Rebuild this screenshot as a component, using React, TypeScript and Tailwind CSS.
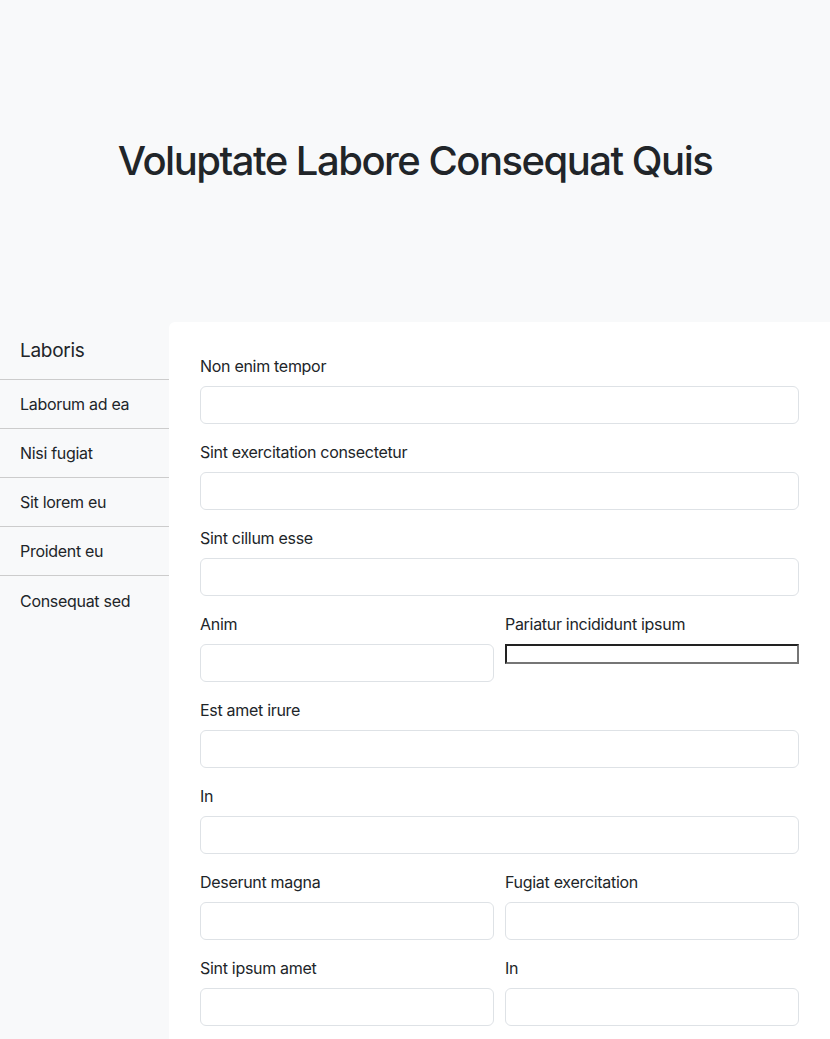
import React from "react";

const navItems = [
  "Laborum ad ea",
  "Nisi fugiat",
  "Sit lorem eu",
  "Proident eu",
  "Consequat sed",
];

type Field = { label: string; plain?: boolean };
type Row = Field[];

const rows: Row[] = [
  [{ label: "Non enim tempor" }],
  [{ label: "Sint exercitation consectetur" }],
  [{ label: "Sint cillum esse" }],
  [{ label: "Anim" }, { label: "Pariatur incididunt ipsum", plain: true }],
  [{ label: "Est amet irure" }],
  [{ label: "In" }],
  [{ label: "Deserunt magna" }, { label: "Fugiat exercitation" }],
  [{ label: "Sint ipsum amet" }, { label: "In" }],
];

const FormField: React.FC<{ field: Field }> = ({ field }) => (
  <div className="flex-1 min-w-0">
    <label className="block mb-2 leading-6">{field.label}</label>
    {field.plain ? (
      <input
        type="text"
        className="block w-full h-[20px] mt-[2px] border-2 border-t-[#222] border-l-[#222] border-b-[#767676] border-r-[#767676] bg-white"
      />
    ) : (
      <input
        type="text"
        className="block w-full h-[38px] px-3 rounded-[6px] border border-[#dee2e6] bg-white outline-none"
      />
    )}
  </div>
);

export default function App() {
  return (
    <div
      className="min-h-screen bg-[#f8f9fa] text-[#212529] text-base tracking-[-0.3px]"
      style={{ fontFamily: "Inter, 'Noto Sans', sans-serif" }}
    >
      {/* Header */}
      <header className="h-[322px] flex items-center justify-center">
        <h1 className="text-[40px] font-medium leading-[1.2] tracking-[-1.5px]">
          Voluptate Labore Consequat Quis
        </h1>
      </header>

      <div className="flex">
        {/* Sidebar */}
        <aside className="w-[169px] shrink-0 bg-[#f8f9fa] rounded-tl-[6px]">
          <div className="h-[58px] px-5 pt-[2px] flex items-center text-[19px] border-b border-[#ccc]">
            Laboris
          </div>
          {navItems.map((item, i) => (
            <div
              key={item}
              className={
                "h-[49px] px-5 flex items-center " +
                (i < navItems.length - 1 ? "border-b border-[#ccc]" : "")
              }
            >
              {item}
            </div>
          ))}
        </aside>

        {/* Form */}
        <main className="flex-1 bg-white rounded-tl-[6px] pt-8 px-[31px] pb-4">
          {rows.map((row, i) => (
            <div key={i} className="flex gap-[11px] mb-4">
              {row.map((field, j) => (
                <FormField key={j} field={field} />
              ))}
            </div>
          ))}
        </main>
      </div>
    </div>
  );
}
